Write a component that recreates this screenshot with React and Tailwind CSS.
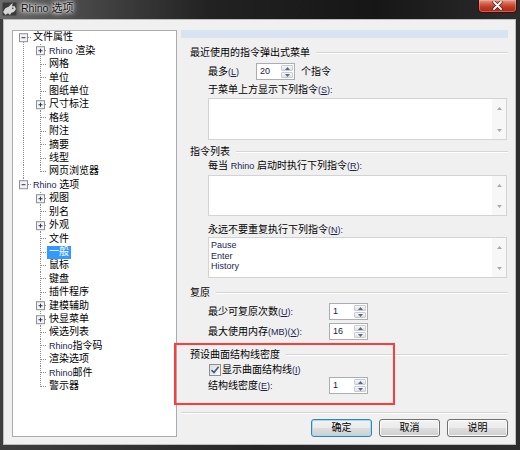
import React from "react";

// Latin fragments are set a touch smaller than the CJK text around them
const Lat = ({ children }) => (
  <span className="text-[9px] text-[#1d2452]">{children}</span>
);

// Access-key marker such as (L), with the letter underlined
const Key = ({ k }) => (
  <span className="text-[9px] text-[#1d2452]">
    (<span className="underline underline-offset-[1px]">{k}</span>)
  </span>
);

const TREE = [
  { label: "文件属性", level: 0, box: "minus", root: "first" },
  { label: <><Lat>Rhino</Lat> 渲染</>, level: 1, box: "plus", trunk: true },
  { label: "网格", level: 1, trunk: true },
  { label: "单位", level: 1, trunk: true },
  { label: "图纸单位", level: 1, trunk: true },
  { label: "尺寸标注", level: 1, box: "plus", trunk: true },
  { label: "格线", level: 1, trunk: true },
  { label: "附注", level: 1, trunk: true },
  { label: "摘要", level: 1, trunk: true },
  { label: "线型", level: 1, trunk: true },
  { label: "网页浏览器", level: 1, trunk: true, last: true },
  { label: <><Lat>Rhino</Lat> 选项</>, level: 0, box: "minus", root: "last" },
  { label: "视图", level: 1, box: "plus" },
  { label: "别名", level: 1 },
  { label: "外观", level: 1, box: "plus" },
  { label: "文件", level: 1 },
  { label: "一般", level: 1, selected: true },
  { label: "鼠标", level: 1 },
  { label: "键盘", level: 1 },
  { label: "插件程序", level: 1 },
  { label: "建模辅助", level: 1, box: "plus" },
  { label: "快显菜单", level: 1, box: "plus" },
  { label: "候选列表", level: 1 },
  { label: <><Lat>Rhino</Lat>指令码</>, level: 1 },
  { label: "渲染选项", level: 1 },
  { label: <><Lat>Rhino</Lat>邮件</>, level: 1 },
  { label: "警示器", level: 1, last: true },
];

const RH = 13.42;

function TreeRow({ row }) {
  const c = RH / 2;
  const rootX = 10.5;
  const childX = 27.5;
  const w = row.level === 0 ? 18 : 34;
  const cx = row.level === 0 ? rootX : childX;
  const dot = {
    stroke: "#8c8c8c",
    strokeWidth: 1,
    strokeDasharray: "1 1",
    shapeRendering: "crispEdges",
  };
  return (
    <div className="flex h-[13.42px] items-center">
      <svg width={w} height={RH} className="shrink-0">
        {row.level === 0 && row.root === "first" && (
          <line x1={rootX} y1={c} x2={rootX} y2={RH} {...dot} />
        )}
        {row.level === 0 && row.root === "last" && (
          <line x1={rootX} y1={0} x2={rootX} y2={c} {...dot} />
        )}
        {row.level === 1 && row.trunk && (
          <line x1={rootX} y1={0} x2={rootX} y2={RH} {...dot} />
        )}
        {row.level === 1 && (
          <line x1={childX} y1={0} x2={childX} y2={row.last ? c : RH} {...dot} />
        )}
        <line x1={cx} y1={c} x2={w} y2={c} {...dot} />
        {row.box && (
          <g>
            <rect x={cx - 4} y={c - 4} width={8} height={8} fill="#f3f3f3" stroke="#8f8f8f" strokeWidth="1" />
            <line x1={cx - 2} y1={c} x2={cx + 2} y2={c} stroke="#26365e" strokeWidth="1" />
            {row.box === "plus" && (
              <line x1={cx} y1={c - 2} x2={cx} y2={c + 2} stroke="#26365e" strokeWidth="1" />
            )}
          </g>
        )}
      </svg>
      <span
        className={`px-[2px] leading-[12.6px] ${
          row.selected ? "bg-[#3399ff] text-white" : "text-black"
        }`}
      >
        {row.label}
      </span>
    </div>
  );
}

function Tree() {
  return (
    <div className="h-full w-[165px] shrink-0 border border-[#a9abb0] bg-white">
      {TREE.map((row, i) => (
        <TreeRow key={i} row={row} />
      ))}
    </div>
  );
}

function Heading({ children, className = "" }) {
  return (
    <div className={`flex h-[14px] items-center pl-[9px] ${className}`}>
      <span className="leading-[14px]">{children}</span>
      <div className="ml-[6px] h-0 flex-1 border-b border-t border-b-white border-t-[#d5d5d5]" />
    </div>
  );
}

function SpinBtn({ up }) {
  return (
    <div className="flex flex-1 items-center justify-center rounded-[1px] border border-[#c9ccd1] bg-[linear-gradient(#f7f7f7,#e2e2e2)]">
      <svg width="5" height="3">
        {up ? (
          <path d="M0 3 L2.5 0 L5 3 Z" fill="#56678a" />
        ) : (
          <path d="M0 0 L5 0 L2.5 3 Z" fill="#56678a" />
        )}
      </svg>
    </div>
  );
}

function Spinner({ value }) {
  return (
    <div className="flex h-[17px] w-[39px] shrink-0 border border-[#abadb3] bg-white">
      <div className="flex flex-1 items-center pl-[3px] text-[9px] text-[#1e1a4a]">{value}</div>
      <div className="flex w-[13px] flex-col gap-[1px] py-[1px] pr-[1px]">
        <SpinBtn up />
        <SpinBtn />
      </div>
    </div>
  );
}

function ListBox({ h, items = [] }) {
  return (
    <div className={`ml-[27px] mr-[1px] flex ${h} border border-[#d3d3d3] bg-white`}>
      <div className="flex-1 pl-[2px] pt-[2px]">
        {items.map((t) => (
          <div key={t} className="h-[10.5px] text-[9px] leading-[10.5px] text-[#1d2452]">
            {t}
          </div>
        ))}
      </div>
      <div className="flex w-[14px] flex-col items-center justify-between bg-[#f7f7f7] pb-[7px] pt-[8px]">
        <svg width="5" height="3">
          <path d="M0 3 L2.5 0 L5 3 Z" fill="#a9a9a9" />
        </svg>
        <svg width="5" height="3">
          <path d="M0 0 L5 0 L2.5 3 Z" fill="#a9a9a9" />
        </svg>
      </div>
    </div>
  );
}

function Checkbox() {
  return (
    <div className="flex h-[12px] w-[12px] shrink-0 items-center justify-center border border-[#8e8f8f] bg-[linear-gradient(135deg,#d9dce1,#fbfbfb)]">
      <svg width="10" height="10" viewBox="0 0 10 10">
        <path d="M1.5 5.2 L4 7.6 L8.6 1.8" fill="none" stroke="#46577c" strokeWidth="1.6" />
      </svg>
    </div>
  );
}

function Btn({ children, primary }) {
  return (
    <div
      className={`flex h-[18px] w-[61px] items-center justify-center rounded-[3px] border bg-[linear-gradient(#f2f2f2_0%,#ebebeb_50%,#dddddd_50%,#cfcfcf_100%)] ${
        primary
          ? "border-[#3c7fb1] shadow-[inset_0_0_0_1px_#9fdcf8]"
          : "border-[#707070] shadow-[inset_0_0_0_1px_#fcfcfc]"
      }`}
    >
      {children}
    </div>
  );
}

function Panel() {
  return (
    <div className="flex w-[327px] flex-col">
      <div className="h-[8px] bg-[#d8e4f1]" />

      <Heading className="mt-[8px]">最近使用的指令弹出式菜单</Heading>
      <div className="mt-[3px] flex h-[17px] items-center pl-[27px]">
        <span className="w-[48px]">
          最多<Key k="L" />
        </span>
        <Spinner value="20" />
        <span className="ml-[6px]">个指令</span>
      </div>
      <div className="mt-[4px] flex h-[12px] items-center pl-[27px]">
        <span>
          于菜单上方显示下列指令<Key k="S" />
          <Lat>:</Lat>
        </span>
      </div>
      <div className="mt-[2px]">
        <ListBox h="h-[42px]" />
      </div>

      <Heading className="mt-[5px]">指令列表</Heading>
      <div className="mt-[1px] flex h-[12px] items-center pl-[27px]">
        <span>
          每当 <Lat>Rhino</Lat> 启动时执行下列指令<Key k="R" />
          <Lat>:</Lat>
        </span>
      </div>
      <div className="mt-[3px]">
        <ListBox h="h-[41px]" />
      </div>
      <div className="mt-[8px] flex h-[12px] items-center pl-[27px]">
        <span>
          永远不要重复执行下列指令<Key k="N" />
          <Lat>:</Lat>
        </span>
      </div>
      <div className="mt-[1px]">
        <ListBox h="h-[41px]" items={["Pause", "Enter", "History"]} />
      </div>

      <Heading className="mt-[8px]">复原</Heading>
      <div className="mt-[3px] flex h-[17px] items-center pl-[27px]">
        <span className="w-[121px]">
          最少可复原次数<Key k="U" />
          <Lat>:</Lat>
        </span>
        <Spinner value="1" />
      </div>
      <div className="mt-[3px] flex h-[17px] items-center pl-[27px]">
        <span className="w-[121px]">
          最大使用内存<Lat>(MB)</Lat>
          <Key k="X" />
          <Lat>:</Lat>
        </span>
        <Spinner value="16" />
      </div>

      <Heading className="mt-[8px]">预设曲面结构线密度</Heading>
      <div className="mt-[1px] flex h-[13px] items-center pl-[28px]">
        <Checkbox />
        <span className="ml-[1px]">
          显示曲面结构线<Key k="I" />
        </span>
      </div>
      <div className="mt-[1px] flex h-[17px] items-center pl-[27px]">
        <span className="w-[121px]">
          结构线密度<Key k="E" />
          <Lat>:</Lat>
        </span>
        <Spinner value="1" />
      </div>

      <div className="mt-[18px] h-0 border-b border-t border-b-white border-t-[#d5d5d5]" />
      <div className="mt-[5px] flex justify-end gap-[7px]">
        <Btn primary>确定</Btn>
        <Btn>取消</Btn>
        <Btn>说明</Btn>
      </div>
    </div>
  );
}

function TitleBar() {
  return (
    <div className="flex h-[19px] shrink-0 items-start bg-[linear-gradient(90deg,#6a6a6a_0%,#4b4b4b_14%,#222222_40%,#161616_72%,#2c2c2c_100%)]">
      {/* application icon: a small grey rhino */}
      <svg className="ml-[2px] mt-[2px] shrink-0" width="15" height="14" viewBox="0 0 15 14">
        <rect x="0.5" y="0.5" width="14" height="13" rx="1" fill="#3a3a3a" />
        <path
          d="M1.5 10 L3.5 6.5 L7 5 L9.5 2 L10 4.8 L12.5 4.5 L13.5 7 L12 9.5 L9 10.5 L8 12.5 L6 10.8 L3.5 12.5 Z"
          fill="#d6d6d6"
          stroke="#f4f4f4"
          strokeWidth="0.6"
        />
        <path d="M9.5 2 L11 0.8 L10.4 3.6 Z" fill="#9a9a9a" />
        <circle cx="10.8" cy="6.3" r="0.8" fill="#333" />
      </svg>
      <span className="ml-[4px] mt-[1px] text-[11px] leading-[14px] text-[#111] [text-shadow:0_0_7px_#fff,0_0_4px_#fff,0_0_2px_#fff]">
        <span className="text-[10.5px]">Rhino</span> 选项
      </span>
      <div className="ml-auto mr-[3px] flex h-[13px] w-[39px] items-start justify-center rounded-b-[4px] border border-t-0 border-[#3b0f08] bg-[linear-gradient(#e49a8c_0%,#cf5a44_35%,#c03a22_60%,#a8281a_100%)] pt-[1px] shadow-[inset_0_0_0_1px_rgba(255,200,190,0.35)]">
        <svg width="11" height="9" viewBox="0 0 11 9">
          <path d="M2 1 L9 8 M9 1 L2 8" stroke="#4a1a12" strokeWidth="3.2" strokeLinecap="round" />
          <path d="M2 1 L9 8 M9 1 L2 8" stroke="#ffffff" strokeWidth="1.8" strokeLinecap="round" />
        </svg>
      </div>
    </div>
  );
}

export default function App() {
  return (
    <div className="relative flex h-[450px] w-[520px] flex-col overflow-hidden bg-[linear-gradient(90deg,#3e3e3e,#262626_50%,#2d2d2d)] font-['Liberation_Sans','Noto_Sans_CJK_SC',sans-serif] text-[10px] leading-none text-black">
      <TitleBar />
      <div className="flex flex-1 pb-[5px] pl-[3px] pr-[4px]">
        <div className="flex flex-1 gap-[4px] border border-[#bdbdbd] bg-[#f0f0f0] pb-[7px] pl-[8px] pr-[7px] pt-[10px]">
          <Tree />
          <Panel />
        </div>
      </div>
      {/* highlight frame drawn over the dialog */}
      <div className="pointer-events-none absolute left-[174px] top-[343px] h-[62px] w-[221px] border-2 border-[#ff3b3b]" />
    </div>
  );
}
